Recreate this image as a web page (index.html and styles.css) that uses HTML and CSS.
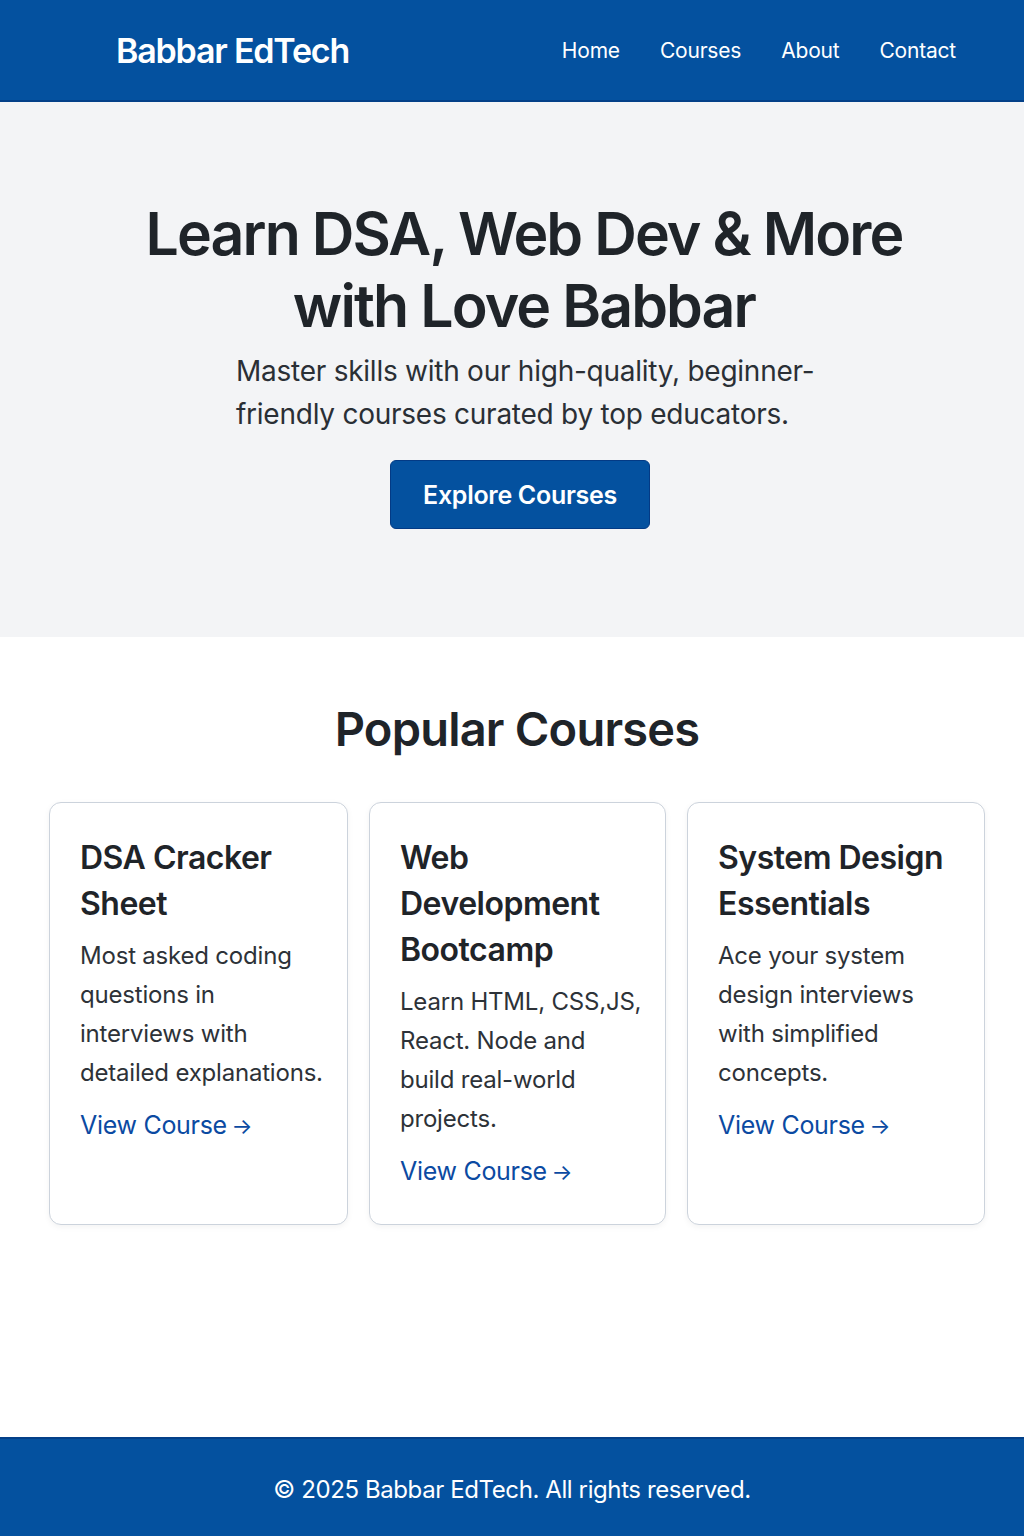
FILE: index.html
```html
<!DOCTYPE html>
<html lang="en">
<head>
<meta charset="utf-8">
<title>Babbar EdTech</title>
<link rel="stylesheet" href="styles.css">
</head>
<body>
<header class="site-header">
  <div class="logo">Babbar EdTech</div>
  <nav class="nav">
    <a href="#">Home</a>
    <a href="#">Courses</a>
    <a href="#">About</a>
    <a href="#">Contact</a>
  </nav>
</header>
<section class="hero">
  <h1 class="hero-title">Learn DSA, Web Dev &amp; More<br>with Love Babbar</h1>
  <p class="hero-sub">Master skills with our high-quality, beginner-friendly courses curated by top educators.</p>
  <a class="btn" href="#">Explore Courses</a>
</section>
<section class="courses">
  <h2 class="section-title">Popular Courses</h2>
  <div class="card-grid">
    <div class="card">
      <h3 class="card-title">DSA Cracker Sheet</h3>
      <p class="card-text">Most asked coding questions in interviews with detailed explanations.</p>
      <a class="card-link" href="#">View Course <span class="arrow">→</span></a>
    </div>
    <div class="card">
      <h3 class="card-title">Web Development Bootcamp</h3>
      <p class="card-text">Learn HTML, CSS,JS, React. Node and build real-world projects.</p>
      <a class="card-link" href="#">View Course <span class="arrow">→</span></a>
    </div>
    <div class="card">
      <h3 class="card-title">System Design Essentials</h3>
      <p class="card-text">Ace your system design interviews with simplified concepts.</p>
      <a class="card-link" href="#">View Course <span class="arrow">→</span></a>
    </div>
  </div>
</section>
<footer class="site-footer">© 2025 Babbar EdTech. All rights reserved.</footer>
</body>
</html>
```

FILE: styles.css
```css
* { box-sizing: border-box; }
html, body { margin: 0; padding: 0; }
body {
  font-family: Inter, "Noto Sans", sans-serif;
  color: #1f2429;
  background: #fff;
  width: 1024px;
  min-height: 1536px;
  display: flex;
  flex-direction: column;
}
a { text-decoration: none; }

.site-header {
  height: 102px;
  background: #04519f;
  border-bottom: 2px solid #034088;
  display: flex;
  align-items: center;
  justify-content: space-between;
  padding: 0 68px 0 116px;
}
.logo {
  color: #fff;
  font-size: 34px;
  font-weight: 600;
  letter-spacing: -1.2px;
}
.nav { display: flex; gap: 40px; }
.nav a {
  color: #fff;
  font-size: 21px;
  letter-spacing: -0.2px;
}

.hero {
  background: #f3f4f6;
  height: 535px;
  display: flex;
  flex-direction: column;
  align-items: center;
  padding-top: 96px;
  padding-left: 24px;
}
.hero-title {
  margin: 0;
  font-size: 59px;
  font-weight: 600;
  line-height: 72px;
  letter-spacing: -1.9px;
  text-align: center;
  color: #1f2429;
}
.hero-sub {
  margin: 8px 0 0 24px;
  width: 600px;
  font-size: 28px;
  line-height: 43px;
  color: #2a2f35;
  letter-spacing: -0.25px;
  font-weight: 400;
}
.btn {
  margin: 24px 8px 0 0;
  width: 260px;
  height: 69px;
  display: flex;
  align-items: center;
  justify-content: center;
  background: #04519f;
  border: 1px solid #033a85;
  border-radius: 6px;
  color: #fff;
  font-size: 25px;
  font-weight: 600;
  letter-spacing: -0.3px;
}

.courses {
  flex: 1;
  padding: 64px 39px 0 49px;
}
.section-title {
  margin: 0;
  text-align: center;
  font-size: 47px;
  font-weight: 600;
  letter-spacing: -0.8px;
  line-height: 56px;
}
.card-grid {
  margin-top: 45px;
  display: grid;
  grid-template-columns: 299px 297px 298px;
  gap: 21px;
}
.card {
  height: 423px;
  border: 1px solid #ccd3dc;
  border-radius: 12px;
  background: #fff;
  box-shadow: 0 2px 6px rgba(0,0,0,0.05);
  padding: 32px 20px 0 30px;
}
.card-title {
  margin: 0;
  font-size: 32px;
  font-weight: 600;
  line-height: 46px;
  letter-spacing: -0.5px;
  color: #1f2429;
}
.card-text {
  margin: 9px 0 0;
  font-size: 24px;
  line-height: 39px;
  color: #2d3238;
  letter-spacing: -0.2px;
}
.card-link {
  display: inline-block;
  margin-top: 18px;
  font-size: 25px;
  color: #0b4aa2;
  letter-spacing: -0.3px;
}
.arrow {
  font-size: 22px;
  margin-left: -2px;
}

.site-footer {
  height: 99px;
  background: #04519f;
  border-top: 2px solid #034088;
  color: #fff;
  font-size: 24px;
  display: flex;
  align-items: center;
  justify-content: center;
  letter-spacing: -0.4px;
  padding-top: 4px;
}
```
